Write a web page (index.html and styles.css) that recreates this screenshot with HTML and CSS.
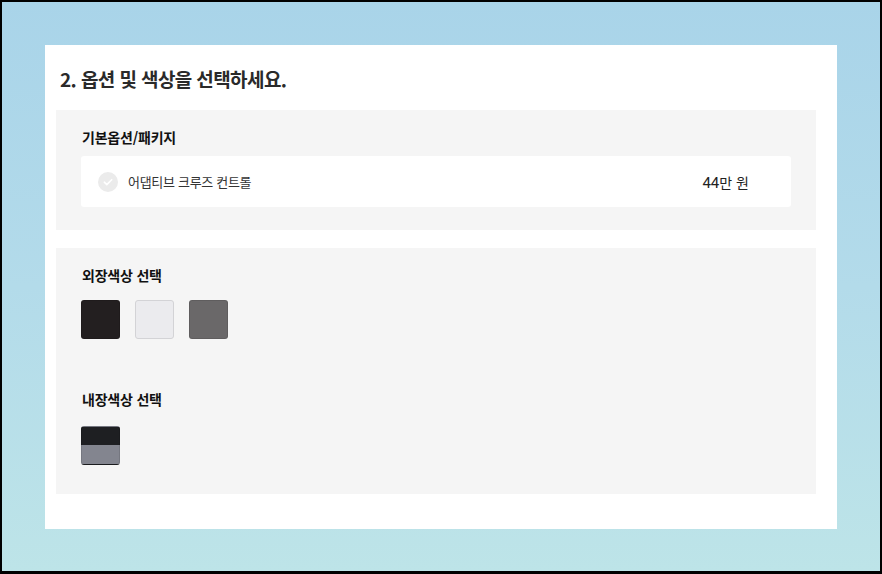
FILE: index.html
```html
<!DOCTYPE html>
<html lang="ko">
<head>
<meta charset="utf-8">
<link rel="stylesheet" href="styles.css">
</head>
<body>
<div class="frame">
  <section class="card">
    <h2 class="heading">2. 옵션 및 색상을 선택하세요.</h2>
    <div class="panel panel-package">
      <h3 class="panel-title">기본옵션/패키지</h3>
      <div class="option-row">
        <span class="check">
          <svg width="20" height="20" viewBox="0 0 20 20"><circle cx="10" cy="10" r="10" fill="#ebebeb"/><path d="M6.3 10.2l2.5 2.4 4.9-4.9" fill="none" stroke="#fff" stroke-width="1.6" stroke-linecap="round" stroke-linejoin="round"/></svg>
        </span>
        <span class="option-name">어댑티브 크루즈 컨트롤</span>
        <span class="option-price"><b class="num">44</b>만 원</span>
      </div>
    </div>
    <div class="panel panel-colors">
      <h3 class="panel-title">외장색상 선택</h3>
      <div class="swatches">
        <span class="swatch sw-black"></span>
        <span class="swatch sw-white"></span>
        <span class="swatch sw-gray"></span>
      </div>
      <h3 class="panel-title title-interior">내장색상 선택</h3>
      <div class="swatches">
        <span class="swatch sw-interior"></span>
      </div>
    </div>
  </section>
</div>
</body>
</html>
```

FILE: styles.css
```css
* { box-sizing: border-box; }
html, body { margin: 0; padding: 0; }
body {
  width: 882px;
  height: 574px;
  font-family: "Noto Sans CJK KR", "Noto Sans", sans-serif;
  color: #222;
}
.frame {
  width: 882px;
  height: 574px;
  border: 2px solid #000;
  border-bottom-width: 3px;
  background: linear-gradient(180deg, #a9d4e9 0%, #b3dbea 50%, #bde4e8 100%);
  padding: 43px 0 0 43px;
}
.card {
  width: 792px;
  height: 484px;
  background: #fff;
  padding: 19px 21px 0 11px;
}
.heading {
  margin: 0 0 16px 4px;
  font-size: 19px;
  line-height: 30px;
  font-weight: 700;
  color: #2a2a2a;
  letter-spacing: -0.6px;
}
.panel {
  background: #f5f5f5;
  padding: 17px 25px 23px 25px;
}
.panel-title {
  margin: 0 0 9px 1px;
  font-size: 14px;
  line-height: 20px;
  font-weight: 700;
  color: #111;
  letter-spacing: -0.2px;
}
.option-row {
  display: flex;
  align-items: center;
  height: 51px;
  background: #fff;
  border-radius: 3px;
  padding: 0 42px 0 17px;
}
.check { display: flex; width: 20px; height: 20px; margin-right: 10px; }
.option-name {
  font-size: 13px;
  color: #333;
  letter-spacing: -0.3px;
}
.option-price {
  margin-left: auto;
  font-size: 14px;
  color: #222;
}
.option-price .num {
  font-weight: 400;
  font-family: "Roboto", "Noto Sans", sans-serif;
  font-size: 15px;
}
.panel-colors {
  margin-top: 18px;
  padding: 17px 25px 29px 25px;
}
.panel-colors .panel-title { margin-bottom: 15px; }
.panel-colors .title-interior { margin-top: 50px; margin-bottom: 17px; }
.swatches { display: flex; gap: 15px; }
.swatch {
  display: block;
  width: 39px;
  height: 39px;
  border-radius: 3px;
  border: 1px solid rgba(0,0,0,0.1);
}
.sw-black { background: #231f20; }
.sw-white { background: #ebebee; border-color: #d3d3d6; }
.sw-gray { background: #6a6869; }
.sw-interior { background: linear-gradient(180deg, #1e1f22 0 50%, #83858f 50% 100%); }
```
